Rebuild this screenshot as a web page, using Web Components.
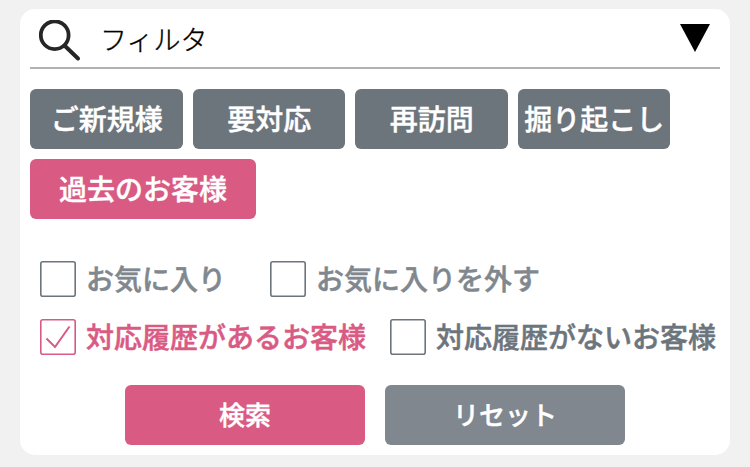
<!DOCTYPE html>
<html lang="ja">
<head>
<meta charset="UTF-8">
<title>フィルタ</title>
<style>
  body {
    margin: 0;
    background: #f1f1f1;
    font-family: "Noto Sans CJK JP", sans-serif;
    --grey: #6c747c;
    --grey-light: #80878e;
    --pink: #d95b83;
  }
  filter-option.first { width: 220px; }
  filter-option.history { width: 340px; }
</style>
</head>
<body>
<filter-panel>
  <filter-header slot="header">フィルタ</filter-header>
  <filter-chip slot="chips">ご新規様</filter-chip>
  <filter-chip slot="chips">要対応</filter-chip>
  <filter-chip slot="chips">再訪問</filter-chip>
  <filter-chip slot="chips">掘り起こし</filter-chip>
  <filter-chip slot="chips" wide active>過去のお客様</filter-chip>
  <filter-option slot="favorite" class="first" light>お気に入り</filter-option>
  <filter-option slot="favorite" light>お気に入りを外す</filter-option>
  <filter-option slot="history" class="history" checked>対応履歴があるお客様</filter-option>
  <filter-option slot="history">対応履歴がないお客様</filter-option>
  <action-button slot="actions" primary>検索</action-button>
  <action-button slot="actions">リセット</action-button>
</filter-panel>

<script>
class FilterPanel extends HTMLElement {
  constructor() {
    super();
    this.attachShadow({ mode: 'open' });
    this.shadowRoot.innerHTML = `
      <style>
        :host {
          display: block;
          box-sizing: border-box;
          width: 710px;
          height: 446px;
          margin: 9px auto 0;
          padding: 0 10px;
          background: #fff;
          border-radius: 15px;
          overflow: hidden;
        }
        .chips {
          display: flex;
          flex-wrap: wrap;
          gap: 10px;
          margin-top: 20px;
        }
        .options {
          display: grid;
          gap: 22px;
          margin-top: 42px;
          padding-left: 10px;
        }
        .row {
          display: flex;
          gap: 10px;
        }
        .actions {
          display: flex;
          justify-content: center;
          gap: 20px;
          margin-top: 30px;
        }
      </style>
      <slot name="header"></slot>
      <div class="chips"><slot name="chips"></slot></div>
      <div class="options">
        <div class="row"><slot name="favorite"></slot></div>
        <div class="row"><slot name="history"></slot></div>
      </div>
      <div class="actions"><slot name="actions"></slot></div>
    `;
  }
}

class FilterHeader extends HTMLElement {
  constructor() {
    super();
    this.attachShadow({ mode: 'open' });
    this.shadowRoot.innerHTML = `
      <style>
        :host {
          display: flex;
          align-items: center;
          box-sizing: border-box;
          height: 60px;
          padding: 0 9px;
          border-bottom: 2px solid #b1b1b3;
          color: #000;
          font-size: 27px;
          font-weight: 300;
          line-height: 40px;
          -webkit-text-stroke: 0.35px currentColor;
        }
        .title {
          flex: 1;
          margin: 2px 0 0 19px;
        }
        svg { display: block; }
        .search {
          width: 42px;
          height: 42px;
          margin-top: 5px;
        }
        .arrow {
          width: 32px;
          height: 30px;
        }
      </style>
      <svg class="search" viewBox="0 0 42 42" fill="none" stroke="#262626">
        <circle cx="15.7" cy="15.2" r="13.9" stroke-width="3.8"></circle>
        <path d="M26 26L39 38.5" stroke-width="4" stroke-linecap="round"></path>
      </svg>
      <span class="title"><slot></slot></span>
      <svg class="arrow" viewBox="0 0 32 30">
        <path d="M1 1H31L16 29Z" fill="#000"></path>
      </svg>
    `;
  }
}

class FilterChip extends HTMLElement {
  constructor() {
    super();
    this.attachShadow({ mode: 'open' });
    this.shadowRoot.innerHTML = `
      <style>
        :host {
          display: flex;
          align-items: center;
          justify-content: center;
          box-sizing: border-box;
          width: 152.5px;
          height: 60px;
          padding: 0 0 2px 1px;
          border-radius: 6px;
          background: var(--grey);
          color: #fff;
          font-size: 28px;
          font-weight: 500;
          line-height: 40px;
          white-space: nowrap;
          -webkit-text-stroke: 0.4px currentColor;
        }
        :host([wide]) {
          width: 226px;
          padding-left: 0;
        }
        :host([active]) { background: var(--pink); }
      </style>
      <slot></slot>
    `;
  }
}

class FilterOption extends HTMLElement {
  constructor() {
    super();
    this.attachShadow({ mode: 'open' });
    this.shadowRoot.innerHTML = `
      <style>
        :host {
          display: flex;
          align-items: center;
          gap: 10px;
          height: 36px;
          color: var(--grey);
          font-size: 28px;
          font-weight: 500;
          line-height: 34px;
          white-space: nowrap;
          -webkit-text-stroke: 0.5px currentColor;
        }
        :host([light]) { color: var(--grey-light); }
        :host([checked]) { color: var(--pink); }
        .box {
          flex: none;
          width: 36px;
          height: 36px;
          fill: none;
          stroke: var(--grey);
          stroke-width: 1.6;
        }
        .label { margin-bottom: 2px; }
        .check {
          display: none;
          stroke-width: 2;
        }
        :host([checked]) .box { stroke: var(--pink); }
        :host([checked]) .check { display: inline; }
      </style>
      <svg class="box" viewBox="0 0 36 36">
        <rect x="0.8" y="0.8" width="34.4" height="34.4" rx="2"></rect>
        <path class="check" d="M6.5 19.5L15 28L29.5 7.5"></path>
      </svg>
      <span class="label"><slot></slot></span>
    `;
  }
}

class ActionButton extends HTMLElement {
  constructor() {
    super();
    this.attachShadow({ mode: 'open' });
    this.shadowRoot.innerHTML = `
      <style>
        :host {
          display: flex;
          align-items: center;
          justify-content: center;
          box-sizing: border-box;
          width: 240px;
          height: 60px;
          padding-bottom: 2px;
          border-radius: 6px;
          background: var(--grey-light);
          color: #fff;
          font-size: 26px;
          font-weight: 500;
          line-height: 40px;
          -webkit-text-stroke: 0.4px currentColor;
        }
        :host([primary]) { background: var(--pink); }
      </style>
      <slot></slot>
    `;
  }
}

customElements.define('filter-panel', FilterPanel);
customElements.define('filter-header', FilterHeader);
customElements.define('filter-chip', FilterChip);
customElements.define('filter-option', FilterOption);
customElements.define('action-button', ActionButton);
</script>
</body>
</html>
